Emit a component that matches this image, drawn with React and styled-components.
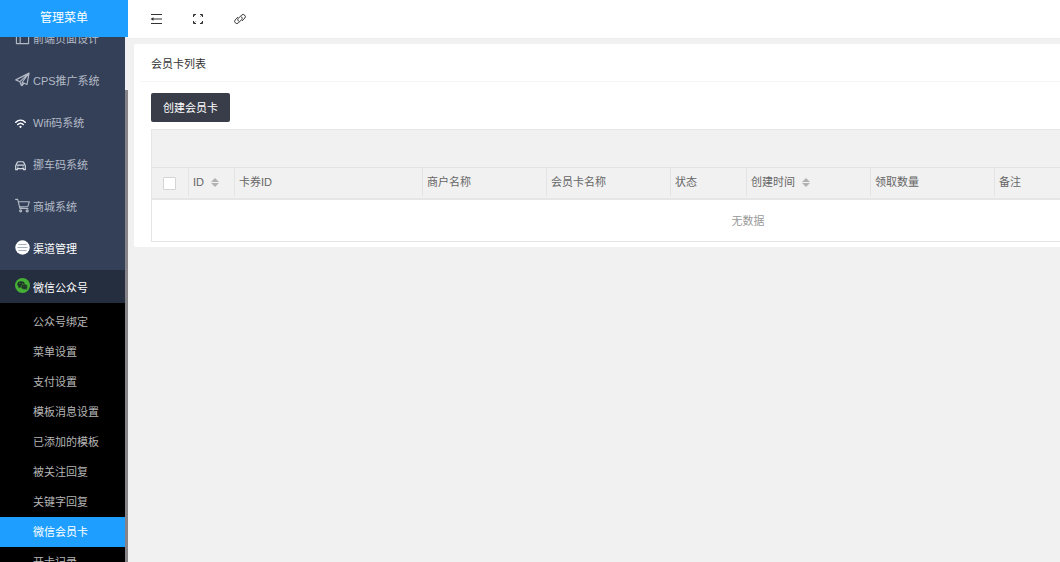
import React, { useState } from "react";
import styled, { createGlobalStyle } from "styled-components";

const GlobalStyle = createGlobalStyle`
  *, *::before, *::after {
    box-sizing: border-box;
  }
  body {
    margin: 0;
    background: #f1f1f1;
    color: #333;
    font: 11px/20px "Liberation Sans", "Noto Sans CJK SC", sans-serif;
    overflow: hidden;
  }
  a {
    color: inherit;
    text-decoration: none;
  }
  button, input {
    font: inherit;
    margin: 0;
  }
`;

const Layout = styled.div`
  display: flex;
  height: 100vh;
`;

const Sidebar = styled.aside`
  display: flex;
  flex-direction: column;
  flex: none;
  width: 128px;
`;

const SidebarTitle = styled.div`
  flex: none;
  height: 37px;
  line-height: 36px;
  font-size: 12px;
  text-align: center;
  color: #fff;
  background: #1e9fff;
`;

const SidebarBody = styled.div`
  display: flex;
  flex: 1;
  min-height: 0;
`;

const MenuView = styled.nav`
  flex: 1;
  overflow: hidden;
  background: #344058;
`;

/* the menu is scrolled part of the way down */
const Menu = styled.ul`
  list-style: none;
  margin: -19px 0 0;
  padding: 0;
`;

const ScrollRail = styled.div`
  flex: none;
  width: 3px;
  padding-top: 53px;
  background: #f0f0f2;
`;

const ScrollThumb = styled.div`
  height: 100%;
  background: #868488;
`;

const MenuLink = styled.a`
  display: flex;
  align-items: center;
  gap: 3px;
  height: ${(p) => (p.$open ? 33 : 42)}px;
  padding: ${(p) => (p.$open ? 2 : 0)}px 0 0 15px;
  color: ${(p) => (p.$bright ? "#fff" : "#b3bac6")};
  background: ${(p) => (p.$open ? "#252e3f" : "transparent")};
  white-space: nowrap;
`;

const IconSlot = styled.span`
  display: flex;
  flex: none;
  width: 15px;
  margin-bottom: ${(p) => (p.$small ? 0 : 4)}px;
`;

const SubMenu = styled.ul`
  list-style: none;
  margin: 0;
  padding: 4px 0;
  background: #000;
`;

const SubLink = styled.a`
  display: block;
  height: 30px;
  line-height: 30px;
  padding-left: 33px;
  color: ${(p) => (p.$active ? "#fff" : "#b5b5b5")};
  background: ${(p) => (p.$active ? "#1e9fff" : "transparent")};
`;

const Main = styled.main`
  flex: 1;
  min-width: 0;
  overflow: hidden;
`;

const Topbar = styled.header`
  display: flex;
  height: 39px;
  padding-left: 7px;
  background: #fff;
  border-bottom: 1px solid #ededed;
`;

const ToolButton = styled.button`
  display: flex;
  align-items: center;
  justify-content: center;
  width: 42px;
  padding: 0;
  border: 0;
  background: none;
  color: #333;
`;

const Panel = styled.section`
  min-width: 1228px;
  margin: 5px 6px 0;
  padding-bottom: 5px;
  background: #fff;
  border-radius: 2px;
`;

const PanelTitle = styled.h1`
  height: 38px;
  margin: 0 0 0 6px;
  padding-left: 11px;
  font-size: 11px;
  font-weight: normal;
  line-height: 40px;
  border-bottom: 1px solid #f6f6f6;
`;

const PanelBody = styled.div`
  padding: 11px 17px 0;
`;

const CreateButton = styled.button`
  display: block;
  height: 29px;
  padding: 0 12px;
  border: 0;
  border-radius: 2px;
  color: #fff;
  background: #393d49;
  line-height: 28px;
`;

const TableBox = styled.div`
  margin-top: 7px;
  border: 1px solid #e6e6e6;
`;

const TableTools = styled.div`
  height: 38px;
  background: #f1f1f1;
  border-bottom: 1px solid #e2e2e2;
`;

const Table = styled.table`
  width: 100%;
  table-layout: fixed;
  border-collapse: separate;
  border-spacing: 0;
`;

const HeadCell = styled.th`
  width: ${(p) => (p.$width ? `${p.$width}px` : "auto")};
  height: 32px;
  padding: 0;
  font-weight: normal;
  text-align: left;
  color: #666;
  background: #f1f1f1;
  border-bottom: 2px solid #e6e6e6;
`;

const HeadInner = styled.div`
  display: flex;
  align-items: center;
  gap: 7px;
  height: 28px;
  margin-bottom: 2px;
  padding: ${(p) => (p.$check ? "2px 0 0 11px" : "0 4px")};
  border-right: 1px solid ${(p) => (p.$last ? "transparent" : "#e4e4e4")};
`;

const Checkbox = styled.input`
  appearance: none;
  width: 13px;
  height: 13px;
  background: #fff;
  border: 1px solid #d4d4d4;
  border-radius: 1px;
`;

const EmptyCell = styled.td`
  height: 41px;
  padding: 0;
  text-align: center;
  color: #999;
`;

const Svg = ({ size = 15, children, ...rest }) => (
  <svg
    width={size}
    height={size}
    viewBox="0 0 16 16"
    fill="none"
    stroke="currentColor"
    strokeLinecap="round"
    strokeLinejoin="round"
    aria-hidden="true"
    {...rest}
  >
    {children}
  </svg>
);

const LayoutIcon = () => (
  <Svg>
    <path d="M1.500 2.500h13v12h-13zM1.500 6h13M5.500 6v8.500" strokeWidth="1.200" />
  </Svg>
);

const PlaneIcon = () => (
  <Svg strokeWidth="1.200">
    <path d="M15 1.200.8 8.400l4.400 1.900L15 1.200l-2.200 12.200-4.300-2M15 1.200 7.600 10.900v3.800l2-2.700M5.200 10.300l1.400 3.900" />
  </Svg>
);

const WifiIcon = () => (
  <Svg size={11} stroke="#fff" strokeWidth="2.300">
    <path d="M1.200 6.200c4-3.800 9.600-3.800 13.600 0M4 9.500c2.400-2.200 5.600-2.200 8 0" />
    <circle cx="8" cy="12.800" r=".9" fill="#fff" strokeWidth="1.500" />
  </Svg>
);

const CarIcon = () => (
  <Svg size={11} stroke="#d5dae2" strokeWidth="1.700">
    <path d="M1 8.500V14h2.500v-1.500h9V14H15V8.500M1 8.500l2.200-5Q3.700 2.500 5 2.500h6q1.300 0 1.800 1l2.200 5M3.500 7.500h9M4 10.200h.5M11.500 10.200h.5" />
  </Svg>
);

const CartIcon = () => (
  <Svg strokeWidth="1.200">
    <path d="M.7 1.500h2.200l2.300 9.500h8.600M3.600 4h11.700l-1.600 5-8.800.5" />
    <circle cx="6" cy="13.700" r="1.100" />
    <circle cx="13" cy="13.700" r="1.100" />
  </Svg>
);

const ChannelIcon = () => (
  <Svg stroke="none">
    <circle cx="8" cy="8" r="7.700" fill="#fff" />
    <path d="M4 4.800h8M3 8h10M4 11.200h8" stroke="#98a1b0" strokeWidth=".9" />
  </Svg>
);

const WechatIcon = () => (
  <Svg stroke="none">
    <circle cx="8" cy="8" r="8" fill="#45b035" />
    <ellipse cx="6.500" cy="6.700" rx="4" ry="3.300" fill="#20352a" />
    <path d="m4 9-.5 2 2.200-1.200z" fill="#20352a" />
    <ellipse cx="10" cy="9.400" rx="3.500" ry="2.900" fill="#20352a" stroke="#45b035" strokeWidth=".5" />
    <path d="m11 11.600 1.800 1-.4-1.800z" fill="#20352a" />
    <g fill="#45b035">
      <circle cx="5.200" cy="5.800" r=".5" />
      <circle cx="7.900" cy="5.800" r=".5" />
      <circle cx="8.900" cy="8.700" r=".4" />
      <circle cx="11.200" cy="8.700" r=".4" />
    </g>
  </Svg>
);

const ShrinkIcon = () => (
  <Svg size={12} viewBox="0 0 12 12" strokeLinecap="butt" strokeWidth="1.200">
    <path d="M1 1.500h11M3 6h9M1 10.500h11" />
    <path d="M3.500 4.200v3.600L.5 6z" fill="currentColor" stroke="none" />
  </Svg>
);

const FullscreenIcon = () => (
  <Svg size={12} viewBox="0 0 12 12" strokeLinecap="butt">
    <path d="M4 1.500H1.500V4M8 1.500h2.500V4M4 10.500H1.500V8M8 10.500h2.500V8" />
    <path d="M10.300 1.700 8.500 3.500M1.700 10.300l1.800-1.800M1.700 1.700l1.200 1.200M10.300 10.300 9.100 9.100" strokeWidth=".8" />
  </Svg>
);

const LinkIcon = () => (
  <Svg size={12} viewBox="0 0 12 12">
    <path d="M4.300 8.100a2 2 0 0 1 .1-2.800L7.700 2a2.200 2.200 0 0 1 3.100 3.100L8.200 7.700" />
    <path d="M7.700 3.900a2 2 0 0 1-.1 2.800L4.300 10a2.200 2.200 0 0 1-3.100-3.100l2.600-2.600" />
  </Svg>
);

const SortIcon = () => (
  <svg width="8" height="9" viewBox="0 0 8 9" fill="#b2b2b2" aria-hidden="true">
    <path d="M4 0l4 4H0zM0 5h8L4 9z" />
  </svg>
);

const menuItems = [
  { label: "前端页面设计", icon: LayoutIcon },
  { label: "CPS推广系统", icon: PlaneIcon },
  { label: "Wifi码系统", icon: WifiIcon, small: true },
  { label: "挪车码系统", icon: CarIcon, small: true },
  { label: "商城系统", icon: CartIcon },
  { label: "渠道管理", icon: ChannelIcon, bright: true },
  { label: "微信公众号", icon: WechatIcon, bright: true, open: true },
];

const subItems = [
  "公众号绑定",
  "菜单设置",
  "支付设置",
  "模板消息设置",
  "已添加的模板",
  "被关注回复",
  "关键字回复",
  "微信会员卡",
  "开卡记录",
];

const columns = [
  { title: "ID", width: 46, sort: true },
  { title: "卡券ID", width: 188 },
  { title: "商户名称", width: 124 },
  { title: "会员卡名称", width: 124 },
  { title: "状态", width: 76 },
  { title: "创建时间", width: 124, sort: true },
  { title: "领取数量", width: 124 },
  { title: "备注" },
];

function SideMenu() {
  const [active, setActive] = useState("微信会员卡");

  return (
    <Sidebar>
      <SidebarTitle>管理菜单</SidebarTitle>
      <SidebarBody>
        <MenuView>
          <Menu>
            {menuItems.map(({ label, icon: Icon, small, bright, open }) => (
              <li key={label}>
                <MenuLink href="#" $bright={bright} $open={open}>
                  <IconSlot $small={small}>
                    <Icon />
                  </IconSlot>
                  {label}
                </MenuLink>
                {open && (
                  <SubMenu>
                    {subItems.map((name) => (
                      <li key={name}>
                        <SubLink
                          href="#"
                          $active={name === active}
                          onClick={() => setActive(name)}
                        >
                          {name}
                        </SubLink>
                      </li>
                    ))}
                  </SubMenu>
                )}
              </li>
            ))}
          </Menu>
        </MenuView>
        <ScrollRail>
          <ScrollThumb />
        </ScrollRail>
      </SidebarBody>
    </Sidebar>
  );
}

function CardTable() {
  return (
    <TableBox>
      <TableTools />
      <Table>
        <thead>
          <tr>
            <HeadCell $width={37}>
              <HeadInner $check>
                <Checkbox type="checkbox" aria-label="全选" />
              </HeadInner>
            </HeadCell>
            {columns.map((col, i) => (
              <HeadCell key={col.title} $width={col.width}>
                <HeadInner $last={i === columns.length - 1}>
                  {col.title}
                  {col.sort && <SortIcon />}
                </HeadInner>
              </HeadCell>
            ))}
          </tr>
        </thead>
        <tbody>
          <tr>
            <EmptyCell colSpan={columns.length + 1}>无数据</EmptyCell>
          </tr>
        </tbody>
      </Table>
    </TableBox>
  );
}

export default function App() {
  return (
    <>
      <GlobalStyle />
      <Layout>
        <SideMenu />
        <Main>
          <Topbar>
            <ToolButton type="button" aria-label="收起菜单">
              <ShrinkIcon />
            </ToolButton>
            <ToolButton type="button" aria-label="全屏">
              <FullscreenIcon />
            </ToolButton>
            <ToolButton type="button" aria-label="链接">
              <LinkIcon />
            </ToolButton>
          </Topbar>
          <Panel>
            <PanelTitle>会员卡列表</PanelTitle>
            <PanelBody>
              <CreateButton type="button">创建会员卡</CreateButton>
              <CardTable />
            </PanelBody>
          </Panel>
        </Main>
      </Layout>
    </>
  );
}
